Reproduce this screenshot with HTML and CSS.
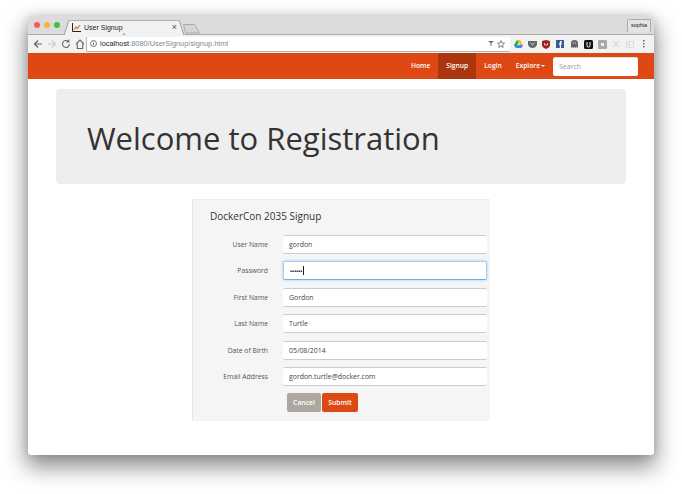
FILE: index.html
```html
<!DOCTYPE html>
<html lang="en">
<head>
<meta charset="utf-8">
<title>User Signup</title>
<link rel="stylesheet" href="styles.css">
</head>
<body>
<div class="window">
  <div class="tabstrip">
    <div class="lights"><span class="light red"></span><span class="light yellow"></span><span class="light green"></span></div>
    <div class="tab">
      <svg class="favicon" width="9" height="9" viewBox="0 0 9 9"><path d="M.5 0v8.500H9" fill="none" stroke="#222"/><path d="M2 7l2-3 1.500 1.500L8 2" fill="none" stroke="#b8892c" stroke-width="1.200"/></svg>
      <span class="tabtitle">User Signup</span>
      <span class="tabclose">×</span>
    </div>
    <svg class="newtab" width="18" height="10" viewBox="0 0 18 10"><path d="M.5.500h11l5 8.500h-14z" fill="#d6d6d6" stroke="#aaa"/></svg>
    <div class="profile">sophia</div>
  </div>
  <div class="toolbar">
    <svg class="tool" width="10" height="10" viewBox="0 0 10 10"><path d="M9 5H1.500M5 1.500L1.500 5 5 8.500" fill="none" stroke="#666" stroke-width="1.200"/></svg>
    <svg class="tool" width="10" height="10" viewBox="0 0 10 10"><path d="M1 5h7.500M5 1.500L8.500 5 5 8.500" fill="none" stroke="#ccc" stroke-width="1.200"/></svg>
    <svg class="tool" width="10" height="10" viewBox="0 0 10 10"><path d="M8.500 5A3.500 3.500 0 1 1 7.300 2.300M7.800 .5v2.500H5.300" fill="none" stroke="#666" stroke-width="1.100"/></svg>
    <svg class="tool" width="10" height="10" viewBox="0 0 10 10"><path d="M1 5l4-4 4 4M2.300 4.500v5h5.400v-5" fill="none" stroke="#666" stroke-width="1.100"/></svg>
    <div class="omnibox">
      <svg width="7" height="7" viewBox="0 0 7 7"><circle cx="3.500" cy="3.500" r="3" fill="none" stroke="#555" stroke-width=".8"/><path d="M3.500 3v2.200M3.500 1.600v.8" stroke="#555" stroke-width=".8"/></svg>
      <span class="url"><span class="host">localhost</span>:8080/UserSignup/signup.html</span>
      <svg width="6" height="7" viewBox="0 0 6 7"><path d="M0 1l2.500 2v3h1V3L6 1z" fill="#666"/></svg>
      <svg width="8" height="8" viewBox="0 0 8 8"><path d="M4 .6l1 2.400 2.500.2-1.900 1.700.6 2.500L4 6.100 1.800 7.400l.6-2.500L.5 3.200 3 3z" fill="none" stroke="#666" stroke-width=".8"/></svg>
    </div>
    <div class="extensions">
      <svg width="9" height="8" viewBox="0 0 9 8"><path d="M3 0h3l3 5H6z" fill="#f4c20d"/><path d="M3 0l1.500 2.600L1.500 8 0 5.300z" fill="#1da462"/><path d="M1.500 8l1.500-3h6L7.500 8z" fill="#4285f4"/></svg>
      <svg width="9" height="7" viewBox="0 0 9 7"><path d="M0 0h9v3a4.500 4 0 0 1-9 0z" fill="#666"/><path d="M2.500 2l2 1.800 2-1.800" fill="none" stroke="#ddd"/></svg>
      <svg width="8" height="9" viewBox="0 0 8 9"><path d="M0 1l4-1 4 1v4c0 2-2 3-4 4-2-1-4-2-4-4z" fill="#a11f1f"/><path d="M2.500 3v2h3V3" fill="none" stroke="#eee" stroke-width=".8"/></svg>
      <svg width="8" height="8" viewBox="0 0 8 8"><path d="M0 0h8v8H0z" fill="#3b5998"/><path d="M5 8V4.500h1V3.300H5V2.500q0-.5.500-.5H6V1H5Q3.800 1 3.800 2.300v1H3v1.200h.8V8z" fill="#fff"/></svg>
      <svg width="7" height="8" viewBox="0 0 7 8"><path d="M0 8V3a3.500 3 0 0 1 7 0v5L5.800 7 4.700 8 3.500 7 2.300 8 1.200 7z" fill="#666"/><path d="M2 3h1M4.200 3h1" stroke="#eee"/></svg>
      <svg width="9" height="9" viewBox="0 0 9 9"><rect width="9" height="9" rx="1.500" fill="#111"/><path d="M3 2v3.500q0 1.500 1.500 1.500T6 5.500V2" fill="none" stroke="#fff"/></svg>
      <svg width="9" height="9" viewBox="0 0 9 9"><rect width="9" height="9" rx="1" fill="#aaa"/><rect x="3" y="3" width="3" height="3" fill="#eee"/></svg>
      <svg width="8" height="8" viewBox="0 0 8 8"><path d="M1 1l6 6M7 1L1 7" stroke="#ddd" stroke-width="1.200"/></svg>
      <svg width="8" height="7" viewBox="0 0 8 7"><rect x=".5" y=".5" width="7" height="6" fill="none" stroke="#ddd"/><rect x="2" y="2" width="2" height="3" fill="#ddd"/></svg>
      <svg width="2" height="8" viewBox="0 0 2 8"><path d="M0 0h1.500v1.500H0zM0 3h1.500v1.500H0zM0 6h1.500v1.500H0z" fill="#666"/></svg>
    </div>
  </div>
  <nav class="navbar">
    <a class="navlink">Home</a>
    <a class="navlink active">Signup</a>
    <a class="navlink">Login</a>
    <a class="navlink explore">Explore<span class="caret"></span></a>
    <input class="search" placeholder="Search">
  </nav>
  <main class="content">
    <div class="jumbotron"><h1>Welcome to Registration</h1></div>
    <form class="panel">
      <h2>DockerCon 2035 Signup</h2>
      <div class="row"><label>User Name</label><input value="gordon"></div>
      <div class="row"><label>Password</label><input class="focus" type="password" value="gordon"></div>
      <div class="row"><label>First Name</label><input value="Gordon"></div>
      <div class="row"><label>Last Name</label><input value="Turtle"></div>
      <div class="row"><label>Date of Birth</label><input value="05/08/2014"></div>
      <div class="row"><label>Email Address</label><input value="gordon.turtle@docker.com"></div>
      <div class="actions"><button type="button" class="btn cancel">Cancel</button><button type="button" class="btn submit">Submit</button></div>
    </form>
  </main>
</div>
</body>
</html>
```
FILE: styles.css
```css
* { box-sizing: border-box; }
html, body { margin: 0; height: 100%; background: #fff; }
body { padding: 16px 28px 0; font-family: "Open Sans", "Noto Sans", sans-serif; overflow: hidden; }
.window { width: 626px; height: 439px; background: #fff; border-radius: 4px 4px 3px 3px; box-shadow: 0 10px 22px 2px rgba(0,0,0,.45), 0 0 8px rgba(0,0,0,.12); display: flex; flex-direction: column; }
.tabstrip { height: 19px; background: #dcdcdc; border-radius: 4px 4px 0 0; border-bottom: 1px solid #a9a9a9; display: flex; align-items: flex-end; flex: none; }
.lights { display: flex; gap: 4px; padding-left: 6px; width: 38px; flex: none; align-self: center; }
.light { width: 6px; height: 6px; border-radius: 50%; }
.red { background: #f25d55; }
.yellow { background: #f6b73a; }
.green { background: #3ec244; }
.tab { position: relative; isolation: isolate; width: 116px; height: 15px; margin-bottom: -1px; display: flex; align-items: center; padding: 0 5px 0 6px; gap: 3px; }
.tab::before, .tab::after { content: ""; position: absolute; z-index: -1; top: 0; bottom: 0; width: 50%; background: #f2f2f2; border-top: 1px solid #b0b0b0; }
.tab::before { left: 0; border-left: 1px solid #999; transform: skewX(-18deg); }
.tab::after { right: 0; border-right: 1px solid #999; transform: skewX(18deg); }
.favicon { flex: none; }
.tabtitle { font: 7px/1 "Liberation Sans", sans-serif; color: #222; flex: 1; }
.tabclose { font: 9px/1 "Liberation Sans", sans-serif; color: #555; }
.newtab { margin: 0 0 0 1px; }
.profile { margin: 3px 3px 0 auto; align-self: flex-start; width: 24px; height: 13px; border: 1px solid #aaa; border-bottom: 0; border-radius: 2px 2px 0 0; background: #e4e4e4; font: 5.500px/11px "Liberation Sans", sans-serif; color: #222; text-align: center; }
.toolbar { height: 18px; background: #f2f2f2; display: flex; align-items: center; padding-left: 5px; flex: none; }
.tool { margin-right: 4px; flex: none; }
.omnibox { width: 424px; height: 15px; margin-left: -3px; background: #fff; border-left: 1px solid #b4b4b4; border-bottom: 1px solid #b4b4b4; border-radius: 2px 0 0 2px; display: flex; align-items: center; gap: 3px; padding: 0 5px 0 3px; flex: none; }
.url { font: 7.400px/1 "Liberation Sans", sans-serif; color: #7d8791; flex: 1; }
.host { color: #222; }
.extensions { display: grid; grid-auto-flow: column; grid-auto-columns: 14px; justify-items: center; align-items: center; padding-left: 1px; flex: 1; }
.navbar { height: 26px; background: #de4815; display: flex; align-items: stretch; justify-content: flex-end; padding-right: 16px; flex: none; }
.navlink { font-size: 6.700px; font-weight: 600; line-height: 26px; color: #fff; padding: 0 8px; white-space: nowrap; }
.active { background: #ab360e; }
.explore { margin-left: -2px; }
.caret { display: inline-block; width: 0; height: 0; margin-left: 1px; border: 2px solid transparent; border-top-color: #fff; border-bottom: 0; vertical-align: middle; }
.search { width: 85px; height: 19px; margin-top: 4px; align-self: flex-start; border: 0; border-radius: 2px; box-shadow: inset 0 1px 1px rgba(0,0,0,.15); padding: 0 6px; font: 7px "Open Sans", sans-serif; }
.search::placeholder { color: #999; opacity: 1; }
.content { padding: 10px 28px 0; display: flex; flex-direction: column; align-items: center; }
.jumbotron { width: 570px; height: 95px; background: #eee; border-radius: 4px; padding: 3px 31px 0; display: flex; align-items: center; flex: none; }
h1 { margin: 0; font-size: 31px; font-weight: 400; color: #333; white-space: nowrap; line-height: 1; }
.panel { width: 298px; height: 222px; margin-top: 15px; background: #f5f5f5; border-left: 1px solid #e3e3e3; border-top: 1px solid #eee; flex: none; }
h2 { margin: 0; height: 31px; padding-top: 10px; padding-left: 17px; font-size: 10px; font-weight: 400; color: #333; line-height: 13px; }
.row { display: flex; align-items: center; height: 26.500px; }
.row label { width: 75px; text-align: right; font-size: 6.800px; color: #555; flex: none; }
.row input { width: 204px; height: 19px; margin-left: 15px; border: 0; border-top: 1px solid #ccc; border-bottom: 1px solid #ccc; border-radius: 2px; background: #fff; padding: 0 6px; font: 6.900px "Open Sans", sans-serif; color: #444; outline: 0; }
.row input.focus { border: 1px solid #a4cdee; border-bottom-color: #66afe9; box-shadow: 0 0 3px rgba(102,175,233,.6); font-size: 5.500px; font-weight: 700; color: #333; background: #fff linear-gradient(#222, #222) no-repeat 19px center / 1px 9px; }
.actions { display: flex; gap: 1px; padding: 3px 0 0 94px; }
.btn { height: 19px; border: 0; border-radius: 2px; color: #fff; font: 600 6.800px "Open Sans", sans-serif; padding: 0; }
.cancel { width: 34px; background: #aea79f; }
.submit { width: 36px; background: #de4815; }
```
